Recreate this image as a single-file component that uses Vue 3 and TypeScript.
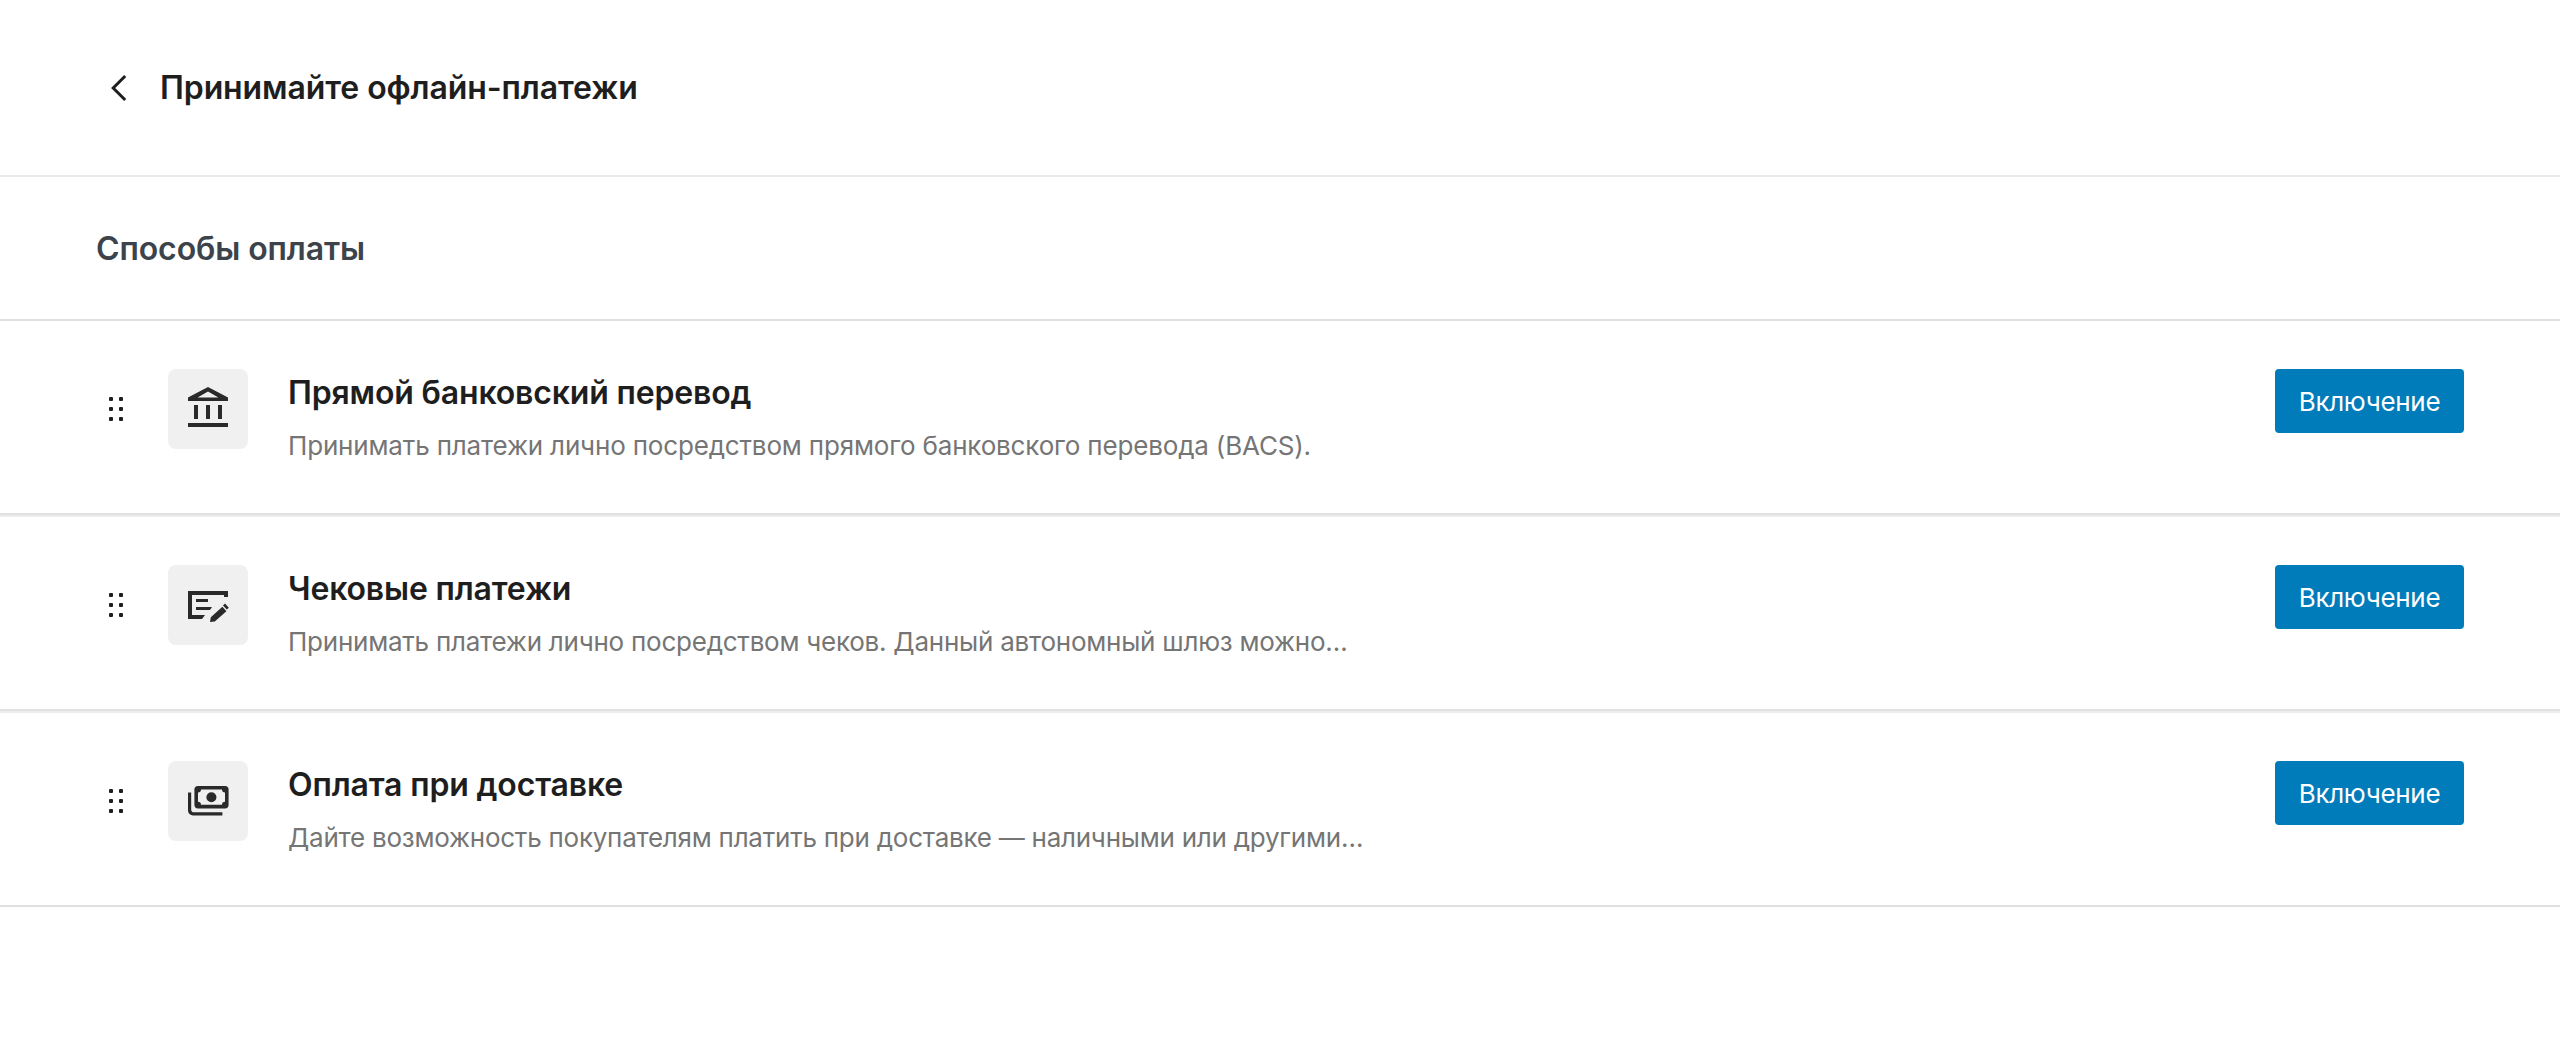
<script setup lang="ts">
interface Gateway {
  id: string
  title: string
  description: string
}

const gateways: Gateway[] = [
  {
    id: 'bacs',
    title: 'Прямой банковский перевод',
    description: 'Принимать платежи лично посредством прямого банковского перевода (BACS).',
  },
  {
    id: 'cheque',
    title: 'Чековые платежи',
    description: 'Принимать платежи лично посредством чеков. Данный автономный шлюз можно…',
  },
  {
    id: 'cod',
    title: 'Оплата при доставке',
    description: 'Дайте возможность покупателям платить при доставке — наличными или другими…',
  },
]
</script>

<template>
  <div class="page">
    <header class="topbar">
      <svg class="back" width="48" height="48" viewBox="0 0 24 24" fill="none">
        <path d="M14.6 6 8.6 12l6 6" stroke="#1e1e1e" stroke-width="1.5" />
      </svg>
      <h1>Принимайте офлайн-платежи</h1>
    </header>

    <div class="section-head">Способы оплаты</div>

    <ul class="list">
      <li v-for="g in gateways" :key="g.id" class="row">
        <div class="grip">
          <i v-for="n in 6" :key="n"></i>
        </div>
        <div class="icon">
          <svg width="48" height="48" viewBox="0 0 24 24" fill="#2a2a2a">
            <template v-if="g.id === 'bacs'">
              <path fill-rule="evenodd" d="M12 1 22 6.200V8H2V6.200ZM12 3.200 6.800 6.200H17.200Z" />
              <path d="M5 10h2v7H5zM11 10h2v7h-2zM17 10h2v7h-2zM2 19h20v2H2z" />
            </template>
            <template v-else-if="g.id === 'cheque'">
              <path d="M2 5h20v3h-2V7H4v10h6.500l-1.500 2H2z" />
              <path d="M6 9h6v1.500H6zM6 13h8l-1 1.500H6z" />
              <path d="M13 20.500l.4-2.400 5.800-5.200 2 2.200-5.800 5.200zM20.500 11.300l1.900 2.100-1 .9-1.900-2.100z" />
            </template>
            <template v-else>
              <path fill-rule="evenodd" d="M7 4.500h13.500a1.800 1.800 0 0 1 1.800 1.800v7.600a1.800 1.800 0 0 1-1.800 1.800H7a1.800 1.800 0 0 1-1.800-1.800V6.300A1.800 1.800 0 0 1 7 4.500ZM8.500 6.300a1.500 1.500 0 0 1-1.500 1.500v4.600a1.500 1.500 0 0 1 1.500 1.500h10.500a1.500 1.500 0 0 1 1.500-1.500V7.800a1.500 1.500 0 0 1-1.500-1.500Z" />
              <circle cx="13.700" cy="10.100" r="2.500" />
              <path d="M2 7.700h1.600V16.200a1.400 1.400 0 0 0 1.400 1.400h14.200v1.600H4.500A2.500 2.500 0 0 1 2 16.700z" />
            </template>
          </svg>
        </div>
        <div class="info">
          <h2>{{ g.title }}</h2>
          <p>{{ g.description }}</p>
        </div>
        <button type="button" class="enable">Включение</button>
      </li>
    </ul>
  </div>
</template>

<style>
html,
body {
  background: #fff;
}
</style>

<style scoped>
.page {
  min-height: 1040px;
  font-family: Inter, "Noto Sans", sans-serif;
  color: #1e1e1e;
  background: #fff;
}
.topbar {
  display: flex;
  align-items: center;
  gap: 16px;
  height: 175px;
  padding: 0 96px;
  border-bottom: 2px solid #ebebeb;
}
.back {
  flex: none;
}
h1 {
  margin: 0;
  font-size: 32px;
  line-height: 48px;
  font-weight: 600;
  letter-spacing: -0.1px;
}
.section-head {
  display: flex;
  align-items: center;
  height: 142px;
  padding: 0 96px;
  font-size: 32px;
  font-weight: 600;
  letter-spacing: -0.1px;
  color: #3c434a;
  border-bottom: 2px solid #e0e0e0;
}
.list {
  list-style: none;
  margin: 0;
  padding: 0;
}
.row {
  display: flex;
  align-items: flex-start;
  height: 96px;
  padding: 48px 96px;
  border-bottom: 2px solid #e0e0e0;
}
.row + .row {
  border-top: 2px solid #ececec;
}
.grip {
  display: grid;
  grid-template-columns: 4px 4px;
  gap: 6px;
  margin: 28px 0 0 13px;
  flex: none;
}
.grip i {
  display: block;
  width: 4px;
  height: 4px;
  background: #1e1e1e;
  border-radius: 1px;
}
.icon {
  display: flex;
  align-items: center;
  justify-content: center;
  flex: none;
  width: 80px;
  height: 80px;
  margin-left: 45px;
  background: #f0f0f0;
  border-radius: 8px;
}
.info {
  flex: 1;
  margin-left: 40px;
}
h2 {
  margin: 0;
  font-size: 32px;
  line-height: 48px;
  font-weight: 600;
  letter-spacing: -0.16px;
}
p {
  margin: 9px 0 0;
  font-size: 26px;
  line-height: 40px;
  letter-spacing: -0.17px;
  color: #757575;
}
.row + .row p {
  letter-spacing: -0.24px;
}
.enable {
  flex: none;
  width: 189px;
  height: 64px;
  padding: 0;
  border: 0;
  border-radius: 4px;
  background: #007cba;
  color: #fff;
  font-family: inherit;
  font-size: 26px;
  letter-spacing: -0.3px;
}
</style>
